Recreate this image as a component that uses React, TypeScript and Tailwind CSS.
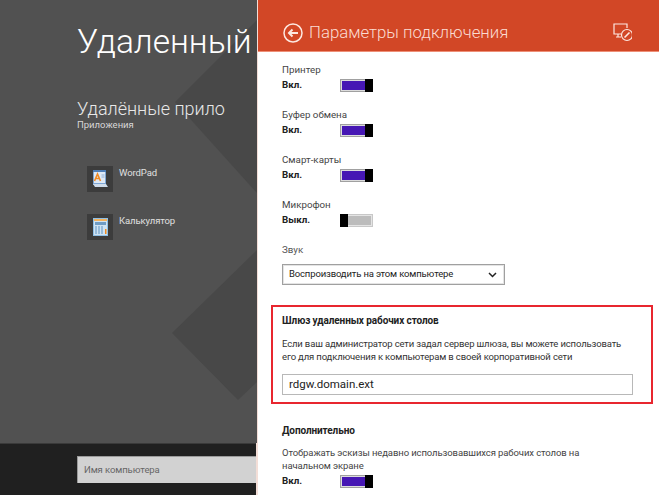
const font = "[font-family:Roboto,'Open_Sans',sans-serif]";

const Toggle = ({ on = true }: { on?: boolean }) =>
  on ? (
    <div className="w-[33px] h-[13px] flex border border-[#a0a0a0] bg-[#4617b4] justify-end shadow-[inset_0_0_0_1px_#dcdcdc]">
      <div className="w-[8px] h-[13px] -my-px -mr-px bg-black" />
    </div>
  ) : (
    <div className="w-[33px] h-[13px] flex border border-[#c8c8c8] bg-[#bcbcbc] shadow-[inset_0_0_0_1px_#e4e4e4]">
      <div className="w-[8px] h-[13px] -my-px -ml-px bg-black" />
    </div>
  );

const ToggleRow = ({ label, on = true }: { label: string; on?: boolean }) => (
  <div className="h-[45px]">
    <div className="h-[16px] leading-[18px] text-[9.75px] text-[#444]">{label}</div>
    <StateRow on={on} />
  </div>
);

const StateRow = ({ on = true }: { on?: boolean }) => (
  <div className="h-[16px] flex items-center">
    <span className="w-[58px] text-[9.75px] font-bold text-[#222]">{on ? "Вкл." : "Выкл."}</span>
    <Toggle on={on} />
  </div>
);

const WordPadIcon = () => (
  <svg width="16" height="18" viewBox="0 0 16 18">
    <rect x="1" y="0" width="13" height="15" fill="#7ea6d4" />
    <rect x="2" y="2" width="11" height="11" fill="#dfe9f5" />
    <rect x="1" y="0" width="13" height="2" fill="#4f7fb8" />
    <path d="M2.5 11 L5.5 4 L8.5 11 M3.7 8.5 H7.3" stroke="#f08a24" strokeWidth="1.6" fill="none" />
    <path d="M9.5 5 H12.5 M9.5 7 H12.5" stroke="#8fb0d6" strokeWidth="1" />
    <path d="M1 14 H14 L16 17 H3 Z" fill="#cfdceb" />
  </svg>
);

const CalcIcon = () => (
  <svg width="15" height="18" viewBox="0 0 15 18">
    <rect x="0" y="0" width="15" height="18" fill="#8fc0e6" />
    <rect x="1" y="1" width="13" height="16" fill="#cfe3f3" />
    <rect x="1" y="1" width="13" height="2" fill="#f2b15c" />
    <rect x="2" y="4" width="11" height="3" fill="#6f9cc4" />
    <path d="M2 9 H11 M2 11 H11 M2 13 H11 M2 15 H11" stroke="#5d93c2" strokeWidth="1" strokeDasharray="2 1" />
    <rect x="12" y="11" width="1.5" height="5" fill="#ee8a1f" />
  </svg>
);

const AppTile = ({ name, icon }: { name: string; icon: React.ReactNode }) => (
  <div className="flex gap-[6px] h-[26px]">
    <div className="w-[26px] h-[26px] bg-[#3c3c3c] flex items-center justify-center">{icon}</div>
    <div className="text-[9.5px] tracking-[-0.1px] leading-[14px] text-[#e0e0e0]">{name}</div>
  </div>
);

export default function App() {
  return (
    <div className={`w-[660px] h-[495px] flex overflow-hidden ${font}`}>
      {/* Start screen */}
      <div className="w-[257px] h-full flex flex-col">
        <div className="relative flex-1 bg-[#515151] overflow-hidden pl-[77px]">
          <svg className="absolute inset-0" width="257" height="443" viewBox="0 0 257 443">
            <path d="M257 20 L175 102 L257 193 Z" fill="#484848" />
            <path d="M257 250 L172 333 L238 400 L257 382 Z" fill="#484848" />
          </svg>
          <div className="relative">
            <div className="pt-[17px] h-[74px] text-[33.5px] leading-[50px] font-light text-white whitespace-nowrap">
              Удаленный
            </div>
            <div className="mt-[23px] w-[148px] h-[24px] overflow-hidden text-[18px] leading-[24px] font-light text-[#e8e8e8]">
              Удалённые прило
            </div>
            <div className="-mt-[3px] text-[9.5px] leading-[14px] text-[#d8d8d8]">Приложения</div>
            <div className="mt-[34px] ml-[10px] flex flex-col gap-[22px]">
              <AppTile name="WordPad" icon={<WordPadIcon />} />
              <AppTile name="Калькулятор" icon={<CalcIcon />} />
            </div>
          </div>
        </div>
        <div className="h-[52px] bg-[#202020] border-t border-[#3a3a3a] pl-[77px] pt-[12px]">
          <div className="h-[27px] bg-[#d2d2d2] border-l border-t border-[#9a9a9a] pl-[6px] text-[9.5px] tracking-[-0.1px] leading-[26px] text-[#666]">
            Имя компьютера
          </div>
        </div>
      </div>

      {/* Settings flyout */}
      <div className="w-[403px] h-full flex flex-col bg-white border-l-2 border-[#f3ded7] -ml-px overflow-hidden">
        <div className="h-[52px] shrink-0 bg-[#d24726] border-b border-[#ee8f77] flex items-center pl-[25px] pr-[27px] pt-[14px]">
          <svg width="20" height="20" viewBox="0 0 20 20" fill="none" stroke="#fde8e1">
            <circle cx="10" cy="10" r="9" strokeWidth="1.5" />
            <path d="M15 10 H6 M9.5 6.5 L6 10 L9.5 13.5" strokeWidth="2" />
          </svg>
          <span className="ml-[6px] text-[16.8px] font-light text-[#fbdcd2] whitespace-nowrap">Параметры подключения</span>
          <svg className="ml-auto -mt-[2px]" width="20" height="20" viewBox="0 0 20 20" fill="none" stroke="#fde8e1" strokeWidth="1.2">
            <path d="M9 12 H2 V2 H15 V6" />
            <path d="M4 15 H9 M6 12 V15" />
            <circle cx="15" cy="13" r="5.5" />
            <path d="M12.5 15.5 L17.5 10.5" strokeWidth="1.6" />
          </svg>
        </div>

        <div className="pl-[24px] pr-[5px] pt-[9px]">
          <ToggleRow label="Принтер" />
          <ToggleRow label="Буфер обмена" />
          <ToggleRow label="Смарт-карты" />
          <ToggleRow label="Микрофон" on={false} />
          <div className="h-[16px] leading-[18px] text-[9.75px] text-[#555]">Звук</div>
          <div className="mt-[7px] w-[223px] h-[21px] border border-[#a0a0a0] shadow-[inset_0_0_0_1px_#e4e4e4] flex items-center justify-between pl-[6px] pr-[7px] text-[9.5px] tracking-[-0.15px] text-[#222]">
            <span>Воспроизводить на этом компьютере</span>
            <svg width="9" height="6" viewBox="0 0 9 6" fill="none" stroke="#222" strokeWidth="1.5">
              <path d="M1 1 L4.5 4.5 L8 1" />
            </svg>
          </div>

          {/* Gateway block, marked with a red frame */}
          <div className="mt-[20px] -ml-[11px] w-[382px] h-[99px] border-2 border-[#e8262f] pl-[9px] pr-[18px]">
            <div className="mt-[6px] h-[16px] leading-[16px] text-[10px] tracking-[-0.1px] font-bold text-[#222]">
              Шлюз удаленных рабочих столов
            </div>
            <div className="mt-[8px] text-[9.5px] tracking-[-0.15px] leading-[13px] text-[#333] whitespace-nowrap">
              <div>Если ваш администратор сети задал сервер шлюза, вы можете использовать</div>
              <div>его для подключения к компьютерам в своей корпоративной сети</div>
            </div>
            <div className="mt-[11px] w-[351px] h-[21px] border border-[#b8b8b8] pl-[6px] text-[11.5px] leading-[19px] text-[#222]">
              rdgw.domain.ext
            </div>
          </div>

          <div className="mt-[19px] h-[16px] leading-[16px] text-[10px] tracking-[-0.1px] font-bold text-[#222]">Дополнительно</div>
          <div className="mt-[7px] w-[330px] text-[9.5px] tracking-[-0.1px] leading-[13px] text-[#444]">
            Отображать эскизы недавно использовавшихся рабочих столов на начальном экране
          </div>
          <div className="mt-[1px]">
            <StateRow />
          </div>
        </div>
      </div>
    </div>
  );
}
